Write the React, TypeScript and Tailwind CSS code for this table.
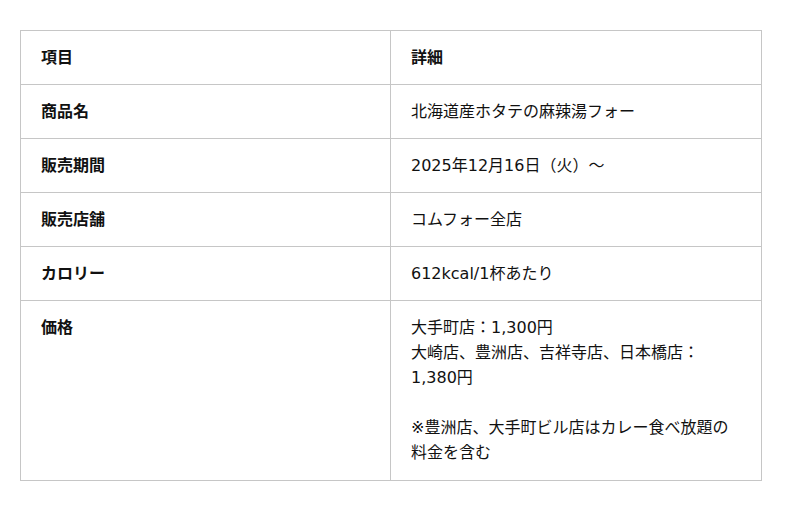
const rows: { label: string; value: React.ReactNode }[] = [
  { label: "商品名", value: "北海道産ホタテの麻辣湯フォー" },
  { label: "販売期間", value: "2025年12月16日（火）〜" },
  { label: "販売店舗", value: "コムフォー全店" },
  { label: "カロリー", value: "612kcal/1杯あたり" },
  {
    label: "価格",
    value: (
      <>
        大手町店：1,300円
        <br />
        大崎店、豊洲店、吉祥寺店、日本橋店：
        <br />
        1,380円
        <br />
        <br />
        ※豊洲店、大手町ビル店はカレー食べ放題の料金を含む
      </>
    ),
  },
];

export default function App() {
  return (
    <div
      className="w-[800px] h-[510px] bg-white pt-[30px] pl-[20px] text-[16px] leading-[25px] text-[#111]"
      style={{ fontFamily: '"DejaVu Sans", "Noto Sans CJK JP", sans-serif' }}
    >
      <table className="w-[742px] table-fixed border-collapse border border-[#dcdcdc]">
        <thead>
          <tr>
            <th className="w-[370px] border border-[#c6c6c6] px-5 py-[14px] text-left font-bold">項目</th>
            <th className="border border-[#c6c6c6] px-5 py-[14px] text-left font-bold">詳細</th>
          </tr>
        </thead>
        <tbody>
          {rows.map((r, i) => (
            <tr key={r.label}>
              <td
                className={`border border-[#c6c6c6] px-5 pt-[14px] align-top font-bold ${
                  i === rows.length - 1 ? "pb-[15px]" : "pb-[14px]"
                }`}
              >
                {r.label}
              </td>
              <td
                className={`border border-[#c6c6c6] px-5 pt-[14px] align-top ${
                  i === rows.length - 1 ? "pb-[15px]" : "pb-[14px]"
                }`}
              >
                {r.value}
              </td>
            </tr>
          ))}
        </tbody>
      </table>
    </div>
  );
}
